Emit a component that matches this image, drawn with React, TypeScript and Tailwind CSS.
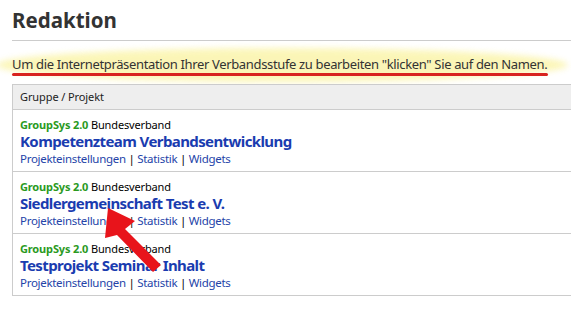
const rows = [
  'Kompetenzteam Verbandsentwicklung',
  'Siedlergemeinschaft Test e. V.',
  'Testprojekt Seminar Inhalt',
];

export default function App() {
  return (
    <div className="relative w-[571px] h-[316px] overflow-hidden bg-white text-[#222]" style={{ fontFamily: '"Noto Sans", "Open Sans", sans-serif' }}>
      {/* yellow marker highlight */}
      <div className="absolute left-[-4px] top-[48px] w-[572px] h-[34px] rounded-[50%] bg-[#fbf5b0] opacity-90 blur-[3px]" />

      <div className="relative pl-3">
        <h1 className="pt-[6px] text-[20.5px] font-bold leading-[28px] text-[#333]">Redaktion</h1>
        <div className="mt-[6px] border-t border-[#cccccc]" />
        <p className="mt-[14px] text-[13px] leading-[18px] tracking-[-0.35px] text-[#333] whitespace-nowrap">
          Um die Internetpräsentation Ihrer Verbandsstufe zu bearbeiten "klicken" Sie auf den Namen.
        </p>
        <div className="mt-0 h-[3px] w-[536px] rounded-full bg-[#d8231f]" />

        <div className="mt-[8px] border-l border-[#cccccc]">
          <div className="h-[26px] border-y border-[#cccccc] bg-[#eeeeee] pl-[7px] text-[11px] leading-[24px] tracking-[-0.1px]">
            Gruppe / Projekt
          </div>
          {rows.map((name) => (
            <div key={name} className="h-[62px] border-b border-[#cccccc] pl-[7px] pt-[8px]">
              <div className="text-[11px] leading-[14px] tracking-[-0.15px]">
                <span className="font-bold text-[#2a9a1e]">GroupSys 2.0</span>{' '}
                <span className="text-black">Bundesverband</span>
              </div>
              <div className="text-[15px] font-bold leading-[19px] tracking-[-0.6px] text-[#1a3cb0]">{name}</div>
              <div className="text-[11.5px] leading-[16px] tracking-[-0.3px] text-black">
                <span className="text-[#2443a8]">Projekteinstellungen</span> |{' '}
                <span className="text-[#2443a8]">Statistik</span> |{' '}
                <span className="text-[#2443a8]">Widgets</span>
              </div>
            </div>
          ))}
        </div>
      </div>

      {/* red arrow */}
      <svg className="absolute left-0 top-0" width="571" height="316" viewBox="0 0 571 316">
        <polygon
          points="108,208 135,221 125,229 161,265 153,272 117,235 105,238"
          fill="#e8141b"
        />
      </svg>
    </div>
  );
}
